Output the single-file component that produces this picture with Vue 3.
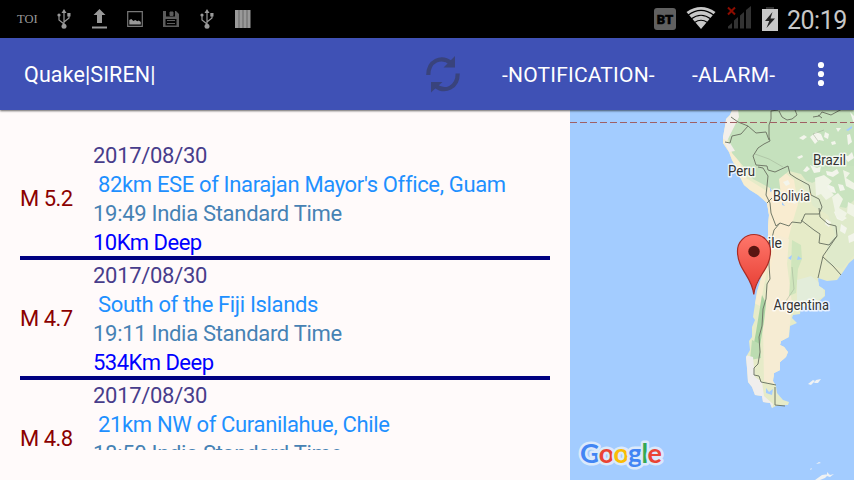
<template>
    <div class="screen">
        <header class="status">
            <div class="tray">
                <span class="toi">TOI</span>
                <svg class="usb" width="14" height="20" viewBox="0 0 14 20">
                    <path d="M7 18V3M2 6v5l5 4M12 6v3l-5 4" fill="none" stroke="#999" stroke-width="1.2" />
                    <path d="M7 0l2.5 4h-5zM10.3 4h3.2v3.5h-3.2z" fill="#999" />
                    <circle cx="2" cy="6" r="1.6" fill="#999" />
                    <circle cx="7" cy="17.2" r="2.5" fill="#999" />
                </svg>
                <svg class="upload" width="16" height="20" viewBox="0 0 16 20">
                    <path d="M7.5 0l6 6H10v8H5V6H1.5zM0 17.5h15v2H0z" fill="#999" />
                </svg>
                <svg class="picture" width="16" height="16" viewBox="0 0 16 16">
                    <path d="M.7.7h14.6v14.6H.7z" fill="none" stroke="#777" stroke-width="1.2" />
                    <path d="M2.3 13.5V9l2-1 2 2 2-1 2 1.2 1.5-.7 2 1.5v2.5z" fill="#999" />
                </svg>
                <svg class="floppy" width="16" height="16" viewBox="0 0 16 16">
                    <path d="M0 0h13l3 3v13H0z" fill="#5c5c5c" />
                    <path d="M3 0h9v5.5H3zM2.5 8h11v6.5h-11z" fill="#000" />
                    <path d="M7 1h3v3.5H7zM4 9.5h8M4 12.5h8" fill="#5c5c5c" stroke="#5c5c5c" />
                </svg>
                <svg class="usb" width="14" height="20" viewBox="0 0 14 20">
                    <path d="M7 18V3M2 6v5l5 4M12 6v3l-5 4" fill="none" stroke="#999" stroke-width="1.2" />
                    <path d="M7 0l2.5 4h-5zM10.3 4h3.2v3.5h-3.2z" fill="#999" />
                    <circle cx="2" cy="6" r="1.6" fill="#999" />
                    <circle cx="7" cy="17.2" r="2.5" fill="#999" />
                </svg>
                <svg class="bars" width="16" height="18" viewBox="0 0 16 18">
                    <path d="M0 0h15.5v18H0z" fill="#999" />
                    <path d="M4 0v18M8 0v18M12 0v18" stroke="#444" stroke-width=".6" />
                </svg>
            </div>
            <div class="system">
                <span class="bt">BT</span>
                <svg class="wifi" width="30" height="22" viewBox="0 0 30 22">
                    <path d="M.5 5Q15-5 29.5 5L15 22z" fill="#c8c8c8" />
                    <path d="M2 8.3Q15-1.5 28 8.3M5 12Q15 4.5 25 12M8.5 15.5Q15 11 21.5 15.5" fill="none" stroke="#000" stroke-width="1.2" />
                </svg>
                <svg class="signal" width="25" height="23" viewBox="0 0 25 23">
                    <path d="M1 22.5v-2l4-3.5v5.5zM7 22.5v-8l4-3.5v11.5zM13 22.5V9.5l4-3.5v16.5zM19 22.5V4l5-4v22.5z" fill="#333" />
                    <path d="M1 1.5l7 7M8 1.5l-7 7" stroke="#8d0c00" stroke-width="2" />
                </svg>
                <svg class="battery" width="16" height="24" viewBox="0 0 16 24">
                    <path d="M4 0h8v3H4z" fill="#333" />
                    <path d="M0 2h16v22H0z" fill="#c8c8c8" />
                    <path d="M10.5 5L3 14h4.2L4.5 21 13 11.5H8.5z" fill="#222" />
                </svg>
                <span class="clock">20:19</span>
            </div>
        </header>

        <div class="toolbar">
            <h1>Quake|SIREN|</h1>
            <svg class="refresh" width="34" height="37" viewBox="0 0 34 37">
                <g fill="none" stroke="#39437c" stroke-width="4.2">
                    <path d="M2.3 19C2.3 5 15-1 25 7" />
                    <path d="M31.7 17.5C31.7 31.5 19 37.5 9 29.5" />
                </g>
                <path d="M29 0v11.5H17.5L22 7zM5 36.5V26h11.5L12 30z" fill="#39437c" />
            </svg>
            <span class="action notification">-NOTIFICATION-</span>
            <span class="action alarm">-ALARM-</span>
            <svg class="more" width="6" height="26" viewBox="0 0 6 26">
                <circle cx="3" cy="4" r="3.1" />
                <circle cx="3" cy="13" r="3.1" />
                <circle cx="3" cy="22" r="3.1" />
            </svg>
        </div>

        <main>
            <section class="pane">
                <ul>
                    <li v-for="quake in quakes" :key="quake.place">
                        <span class="magnitude">M {{ quake.magnitude }}</span>
                        <div class="details">
                            <div class="date">{{ quake.date }}</div>
                            <div class="place">{{ quake.place }}</div>
                            <div class="time">{{ quake.time }} India Standard Time</div>
                            <div v-if="quake.depth" class="depth">{{ quake.depth }}Km Deep</div>
                        </div>
                    </li>
                </ul>
            </section>

            <svg class="map" width="284" height="370" viewBox="570 110 284 370">
                <defs>
                    <clipPath id="land">
                        <path :d="coast" />
                    </clipPath>
                    <linearGradient id="pin" x1="0" y1="0" x2="0" y2="1">
                        <stop offset="0" stop-color="#ff776b" />
                        <stop offset="1" stop-color="#e53b30" />
                    </linearGradient>
                </defs>
                <path d="M570 110h284v370H570z" fill="#a3ccff" />
                <path :d="coast" fill="#e6ebc8" />
                <g clip-path="url(#land)">
                    <path d="M720 130l18 28 8 20 16 10 12 8-4 60-10 50-12-6V200l-30-30z" fill="#f7edcf" />
                    <path d="M768 180l16-8 10 8 4 24-6 20-10 40-14 18-1-66z" fill="#f9ecd0" />
                    <path d="M777 235l12 4-2 25 5 40-3 30-6 34-16 16-3-60 4-40z" fill="#f6ecd3" />
                    <path d="M763 325l26-4-5 22 8 8-8 20-6 14-14-4z" fill="#f6ecd3" />
                    <path d="M728 105h130v64l-4 14-14 4-16-2-17-3-6-8-12-3-10 8 2 16-13-8-15-8-9-12-12-14-4-15z" fill="#c5e1bd" />
                    <path d="M800 178l12 5 20-10 24 0v80l-14 16-16-6 1-18 8-10-7-20-15-9z" fill="#dfeacb" />
                    <path d="M820 170l18-4 20 0v30l-12 12-10-2-6-16z" fill="#c9e3bf" />
                    <path d="M792 240l9 5 1 14-4 10-2 24-7 3 2-26z" fill="#cfe5bc" />
                    <path d="M797 280l14-4 12 10 1 10-12 8-15 0z" fill="#e3edda" />
                    <path d="M762 295l4 8-2 18-4 25-7 2 3-16z" fill="#a9d3a2" />
                    <path d="M752 340l8 4 1 14-11 2z" fill="#bcdcb1" />
                    <path d="M728 109l10 0 1 8-6 12-6 12-5-3zM724 141l6 2 5 8-6 1z" fill="#f3efea" />
                    <path d="M745 355l8 2 2 20 7 5 2 14 9 8-1 8-30-15z" fill="#f0eeed" />
                    <!-- cleared patches in the rainforest -->
                    <g fill="#f3f5ec">
                        <path v-for="(patch, i) in patches" :key="i" :d="patch" />
                    </g>
                    <path d="M815 178l9-3 8 6-5 6 7 8-8 5-5-6-5 2zM832 197l6-4 5 6-4 9 8 5-4 8-7-5zM843 170l7 3-4 5 8 5v7l-8-4zM848 202l6 3v12l-7-4z" fill="#f0f4e6" />
                    <path d="M788 258l4-3-1 5zM798 256l4 3-5 1zM770 187l2 4-2 1zM782 202l3 4-3-1zM846 130l6-4v2l-4 3zM766 388l3 4 4-3-1 6-6-2z" fill="#a3ccff" />
                </g>
                <g fill="none" stroke="#727a69" stroke-linejoin="round">
                    <path d="M778 110l-7 1 0 8-2 6 0 12 1 4-6 3-6 4-5 8 3 9 11 1 1 4 7 2 13-6 2 8 6 4 13 7 2 10 8 4 3 8-3 7-14 0-4 9-9-1-3 4-9-3-4 3-5-13-1-10-4-8 1-9 1-10-5-8-5-1" />
                    <path d="M731 117l7 5 10 4-7 8-9 2-2 7-5-1M748 126l8 7 10-1 3 8M779 111l3 6 5 3 5-1 5-4-2-5M813 117l6-1 3-4 9 3 11-6M818 115l4 3" />
                    <path d="M772 198l-5 5M780 223l-6 7-5 20 0 15 1 14-3 5-1 15-3 10-1 17-3 11 1 15-2 12-4 4 0 7 5 1 2 6 15 3" />
                    <path d="M775 387v18l10 1M801 220l13 10 6 4-1 9 10 2 8-9-1-10-8-2-8-7-1-9M837 236l-14 20-5 22M823 257l10 9 8 9" />
                </g>
                <path d="M755 154l14 5 14 8M824 130l-11 4 5 7M792 267l2 22-8 12M838 159l-9 7" fill="none" stroke="#9dac92" stroke-width=".5" />
                <path d="M570 122.5h284" stroke="#a06064" stroke-width="1.2" stroke-dasharray="7 3" />
                <g fill="#f0f2f3">
                    <path d="M808 384l5-4 2 1-4 4zM814 383l2-3 5-1-3 4zM815 480l7-5 7-1-4 4-5 2zM827 472l3 3 4-1-4 3-3-1zM816 464l3-2 2 1zM810 469l2-1-1 2z" />
                </g>
                <g class="labels">
                    <text x="728" y="176" textLength="27" lengthAdjust="spacingAndGlyphs">Peru</text>
                    <text x="813" y="165" textLength="33" lengthAdjust="spacingAndGlyphs">Brazil</text>
                    <text x="773" y="201" textLength="37" lengthAdjust="spacingAndGlyphs">Bolivia</text>
                    <text x="751" y="247.5" textLength="31" lengthAdjust="spacingAndGlyphs">Chile</text>
                    <text x="773.5" y="309.5" textLength="55.5" lengthAdjust="spacingAndGlyphs">Argentina</text>
                </g>
                <path d="M753.8 294.5C752 276 737.5 270 737.5 251a16.5 16.5 0 0 1 33 0C770.5 270 755.5 276 753.8 294.5z" fill="url(#pin)" stroke="#a92c24" stroke-width="1.2" />
                <circle cx="754" cy="251.5" r="5.7" fill="#591611" />
                <text class="google" x="580" y="462.5" textLength="82">
                    <tspan fill="#4285f4">G</tspan><tspan fill="#ea4335">o</tspan><tspan fill="#fbbc05">o</tspan><tspan fill="#4285f4">g</tspan><tspan fill="#34a853">l</tspan><tspan fill="#ea4335">e</tspan>
                </text>
            </svg>
        </main>
    </div>
</template>

<script setup>
const quakes = [
    { magnitude: '5.2', date: '2017/08/30', place: "82km ESE of Inarajan Mayor's Office, Guam", time: '19:49', depth: 10 },
    { magnitude: '4.7', date: '2017/08/30', place: 'South of the Fiji Islands', time: '19:11', depth: 534 },
    { magnitude: '4.8', date: '2017/08/30', place: '21km NW of Curanilahue, Chile', time: '18:50' }
];

// South American coastline, clockwise from the north-west
const coast = 'M733 108L730 115 726 119 725 126 723 137 723 143 729 152 732 160 737 169 740 177 744 185 750 190 758 195 767 203 769 215 768 228 768 245 764 264 762 275 757 292 755 304 753 317 755 320 752 327 752 337 749 341 750 350 746 357 747 368 748 382 752 387 755 395 762 396 763 402 770 403 772 408 778 405 788 405 789 402 783 400 777 393 776 386 773 381 774 373 780 370 780 362 786 357 788 352 784 347 780 345 781 341 789 337 790 326 797 323 792 318 793 315 800 314 801 307 815 305 825 296 825 290 819 286 818 278 827 281 837 280 843 272 849 263 856 257V108z';

const patches = [
    'M799 138l5-3 3 2-4 3zM810 137l6-5 5 2 3 7-5-1-4 4z',
    'M825 132l4 2-1 5-4-2zM831 142l4-1 1 3-4 1z',
    'M847 135l3-1 2 8-4 3zM836 128l5 0-3 4zM850 112l4 4v8z',
    'M797 157l5-2 1 2-4 2zM803 171l4-5 3 3-4 3z',
    'M810 165l7 3 4-2-1 6-6 1z',
    'M823 189l4-5 7 3 2 6-7-1-3 4z',
    'M843 155l5 1 4-4 2 6-6 4z',
    'M834 212l4-3 3 6 6 3-5 3-5-2z',
    'M783 182l5-2 2 4-4 2zM791 202l7-2-3 4z',
    'M826 219l5 3-2 5-4-3zM841 224l6 4-2 6-5-3zM848 236l6-3v8l-5 2z',
    'M826 171l6 1 5-3 2 4-6 4-6-2zM838 184l5 1 2 5-5 1z'
];
</script>

<style>
body {
    margin: 0;
    overflow: hidden;
}
</style>

<style scoped>
.screen {
    width: 854px;
    height: 480px;
    overflow: hidden;
    display: flex;
    flex-direction: column;
    background: #fffafa;
    font-family: Roboto, sans-serif;
}

.status {
    height: 38px;
    flex-shrink: 0;
    display: flex;
    justify-content: space-between;
    background: #000;
}

.tray,
.system {
    display: flex;
    align-items: center;
}

.toi {
    width: 22px;
    margin: 0 19px 0 16px;
    padding-left: 1px;
    color: #999;
    font: 12.5px "Liberation Serif", serif;
    white-space: nowrap;
}

.usb {
    margin-left: -1px;
}

.upload {
    margin: 0 19px 0 21px;
}

.floppy {
    margin: 0 22px 0 20px;
}

.bars {
    margin-left: 21px;
}

.bt {
    width: 22px;
    height: 22px;
    margin-right: 11px;
    border-radius: 3px;
    background: #606060;
    color: #000;
    font-size: 13px;
    font-weight: 900;
    line-height: 23px;
    text-align: center;
    -webkit-text-stroke: 0.5px #000;
}

.wifi {
    margin: -3px 11px 0 -1px;
}

.signal {
    margin: -3px 10px 0 0;
}

.battery {
    margin-right: 9px;
}

.clock {
    width: 67px;
    margin-top: 2px;
    color: #c8c8c8;
    font-size: 25px;
    letter-spacing: -0.5px;
}

.toolbar {
    position: relative;
    z-index: 1;
    height: 72px;
    flex-shrink: 0;
    display: flex;
    align-items: center;
    background: #3f51b5;
    box-shadow: 0 1px 2px rgba(0, 0, 0, 0.6);
    color: #fff;
}

h1 {
    width: 402px;
    margin: 0 0 0 24px;
    font-size: 21.5px;
    font-weight: 400;
    letter-spacing: 0.1px;
}

.action {
    margin-top: 1px;
    font-size: 21px;
    letter-spacing: 0.2px;
    white-space: nowrap;
}

.notification {
    width: 154px;
    margin-left: 42px;
}

.alarm {
    width: 84px;
    margin-left: 36px;
}

.more {
    margin-left: 42px;
    fill: #fff;
    overflow: visible;
}

main {
    display: flex;
    height: 370px;
}

.pane {
    width: 570px;
    box-sizing: border-box;
    padding: 30px 20px;
}

ul {
    height: 310px;
    margin: 0;
    padding: 0;
    overflow: hidden;
    list-style: none;
}

li {
    display: flex;
    align-items: center;
    height: 116px;
    border-bottom: 4px solid #000080;
    font-size: 22px;
    letter-spacing: -0.3px;
    line-height: 29px;
    white-space: nowrap;
}

.magnitude {
    width: 73px;
    color: #8b0000;
    letter-spacing: -0.5px;
}

.details {
    align-self: flex-start;
    padding-top: 1px;
}

.date {
    color: #483d8b;
}

.place {
    padding-left: 5px;
    color: #1e90ff;
    letter-spacing: -0.35px;
}

.time {
    color: #4682b4;
}

.depth {
    color: #0000ff;
    letter-spacing: -0.5px;
}

.map {
    display: block;
}

.labels {
    font-size: 14.5px;
    fill: #333;
    stroke: #fff;
    stroke-opacity: 0.75;
    stroke-width: 3px;
    stroke-linejoin: round;
    paint-order: stroke;
}

.google {
    font: 700 27px Lato, sans-serif;
    stroke: #dbe9fb;
    stroke-width: 5px;
    stroke-linejoin: round;
    paint-order: stroke;
}
</style>
